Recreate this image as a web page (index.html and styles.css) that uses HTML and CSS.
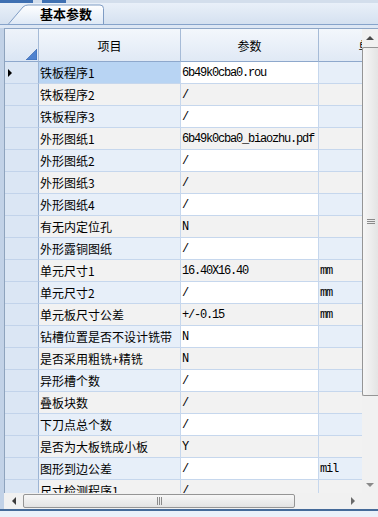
FILE: index.html
```html
<!DOCTYPE html>
<html lang="zh-CN">
  <head>
    <meta charset="UTF-8" />
    <meta name="viewport" content="width=device-width, initial-scale=1.0" />
    <title>基本参数</title>
    <link rel="stylesheet" href="styles.css">
  </head>
  <body>
    <div class="topstrip">
      <span class="seg seg-a"></span>
      <span class="seg seg-b"></span>
    </div>
    <div class="tabbar">
      <svg class="tab" width="97" height="21" viewBox="0 0 97 21">
        <defs>
          <linearGradient id="tabfill" x1="0" y1="0" x2="0" y2="1">
            <stop offset="0" stop-color="#ffffff" />
            <stop offset="1" stop-color="#dfe9f6" />
          </linearGradient>
        </defs>
        <path d="M0.5 21 L15 4 Q17 2 20 2 L92 2 Q95.5 2 95.5 5.5 L95.5 21" fill="url(#tabfill)" stroke="#7f9cc4" />
        <text x="58" y="16" text-anchor="middle" class="tab-label">基本参数</text>
      </svg>
    </div>

    <div class="panel">
      <div class="gridbox">
        <div class="viewport">
          <div class="row head">
            <div class="cell rowhead corner">
              <svg width="11" height="11" viewBox="0 0 11 11">
                <polygon points="11,0 11,11 0,11" fill="#4f82cf" stroke="#2f5ea8" stroke-width="0.6" />
              </svg>
            </div>
            <div class="cell">项目</div>
            <div class="cell">参数</div>
            <div class="cell">单位</div>
          </div>

          <div class="row odd selected">
            <div class="cell rowhead"><span class="marker"></span></div>
            <div class="cell name">铁板程序1</div>
            <div class="cell val">6b49k0cba0.rou</div>
            <div class="cell unit"></div>
          </div>
          <div class="row even">
            <div class="cell rowhead"></div>
            <div class="cell name">铁板程序2</div>
            <div class="cell val">/</div>
            <div class="cell unit"></div>
          </div>
          <div class="row odd">
            <div class="cell rowhead"></div>
            <div class="cell name">铁板程序3</div>
            <div class="cell val">/</div>
            <div class="cell unit"></div>
          </div>
          <div class="row even">
            <div class="cell rowhead"></div>
            <div class="cell name">外形图纸1</div>
            <div class="cell val">6b49k0cba0_biaozhu.pdf</div>
            <div class="cell unit"></div>
          </div>
          <div class="row odd">
            <div class="cell rowhead"></div>
            <div class="cell name">外形图纸2</div>
            <div class="cell val">/</div>
            <div class="cell unit"></div>
          </div>
          <div class="row even">
            <div class="cell rowhead"></div>
            <div class="cell name">外形图纸3</div>
            <div class="cell val">/</div>
            <div class="cell unit"></div>
          </div>
          <div class="row odd">
            <div class="cell rowhead"></div>
            <div class="cell name">外形图纸4</div>
            <div class="cell val">/</div>
            <div class="cell unit"></div>
          </div>
          <div class="row even">
            <div class="cell rowhead"></div>
            <div class="cell name">有无内定位孔</div>
            <div class="cell val">N</div>
            <div class="cell unit"></div>
          </div>
          <div class="row odd">
            <div class="cell rowhead"></div>
            <div class="cell name">外形露铜图纸</div>
            <div class="cell val">/</div>
            <div class="cell unit"></div>
          </div>
          <div class="row even">
            <div class="cell rowhead"></div>
            <div class="cell name">单元尺寸1</div>
            <div class="cell val">16.40X16.40</div>
            <div class="cell unit">mm</div>
          </div>
          <div class="row odd">
            <div class="cell rowhead"></div>
            <div class="cell name">单元尺寸2</div>
            <div class="cell val">/</div>
            <div class="cell unit">mm</div>
          </div>
          <div class="row even">
            <div class="cell rowhead"></div>
            <div class="cell name">单元板尺寸公差</div>
            <div class="cell val">+/-0.15</div>
            <div class="cell unit">mm</div>
          </div>
          <div class="row odd">
            <div class="cell rowhead"></div>
            <div class="cell name">钻槽位置是否不设计铣带</div>
            <div class="cell val">N</div>
            <div class="cell unit"></div>
          </div>
          <div class="row even">
            <div class="cell rowhead"></div>
            <div class="cell name">是否采用粗铣+精铣</div>
            <div class="cell val">N</div>
            <div class="cell unit"></div>
          </div>
          <div class="row odd">
            <div class="cell rowhead"></div>
            <div class="cell name">异形槽个数</div>
            <div class="cell val">/</div>
            <div class="cell unit"></div>
          </div>
          <div class="row even">
            <div class="cell rowhead"></div>
            <div class="cell name">叠板块数</div>
            <div class="cell val">/</div>
            <div class="cell unit"></div>
          </div>
          <div class="row odd">
            <div class="cell rowhead"></div>
            <div class="cell name">下刀点总个数</div>
            <div class="cell val">/</div>
            <div class="cell unit"></div>
          </div>
          <div class="row even">
            <div class="cell rowhead"></div>
            <div class="cell name">是否为大板铣成小板</div>
            <div class="cell val">Y</div>
            <div class="cell unit"></div>
          </div>
          <div class="row odd">
            <div class="cell rowhead"></div>
            <div class="cell name">图形到边公差</div>
            <div class="cell val">/</div>
            <div class="cell unit">mil</div>
          </div>
          <div class="row even">
            <div class="cell rowhead"></div>
            <div class="cell name">尺寸检测程序1</div>
            <div class="cell val">/</div>
            <div class="cell unit"></div>
          </div>
        </div>

        <div class="vscroll">
          <div class="vbtn"><span class="arrow-up"></span></div>
          <div class="vthumb">
            <span class="grip"></span>
            <span class="grip"></span>
            <span class="grip"></span>
          </div>
          <div class="vtrack"></div>
          <div class="vbtn"><span class="arrow-down"></span></div>
        </div>
      </div>

      <div class="hscroll">
        <div class="hbtn"><span class="arrow-left"></span></div>
        <div class="hthumb">
          <span class="hgrip"></span>
          <span class="hgrip"></span>
          <span class="hgrip"></span>
        </div>
        <div class="htrack"></div>
        <div class="hbtn"><span class="arrow-right"></span></div>
        <div class="hcorner"></div>
      </div>
    </div>
    <div class="footer"></div>
  </body>
</html>
```

FILE: styles.css
```css
body {
  margin: 0;
  width: 378px;
  height: 517px;
  overflow: hidden;
  background: #dde7f4;
  font-family: "Noto Sans CJK SC", sans-serif;
  font-size: 12px;
  color: #000;
}
.topstrip {
  height: 3px;
  display: flex;
  background: #d3deec;
}
.seg {
  display: block;
  height: 3px;
  background: #3f70b2;
}
.seg-a {
  width: 33px;
}
.seg-b {
  width: 24px;
  margin-left: 9px;
}
.tabbar {
  height: 21px;
  padding-left: 8px;
  display: flex;
  align-items: flex-end;
  background: linear-gradient(#e9f0f9, #d5e1f0);
  border-bottom: 1px solid #86a3ca;
}
.tab {
  display: block;
}
.tab-label {
  font-family: "Noto Sans CJK SC", sans-serif;
  font-size: 13px;
  font-weight: bold;
  fill: #000;
}
.panel {
  margin-top: 3px;
  padding-left: 4px;
  background: #c2d2e7;
}
.gridbox {
  display: flex;
  height: 465px;
  box-sizing: border-box;
  border-top: 1px solid #8ea6c6;
  border-left: 1px solid #8ea3bd;
}
.viewport {
  width: 357px;
  overflow: hidden;
  background: #fff;
}
.row {
  display: grid;
  grid-template-columns: 34px 142px 138px 104px;
  height: 22px;
}
.cell {
  box-sizing: border-box;
  display: flex;
  align-items: center;
  padding-left: 1px;
  border-right: 1px solid #c6d7ed;
  border-bottom: 1px solid #c6d7ed;
  white-space: nowrap;
  overflow: hidden;
}
.rowhead {
  background: #dbe6f4;
  border-right: 1px solid #9cb4d4;
  border-bottom: 1px solid #c2d3ea;
  padding-left: 3px;
}
.head {
  height: 33px;
}
.head .cell {
  justify-content: center;
  padding-left: 0;
  background: linear-gradient(#f3f7fc, #e0e9f5);
  border-right: 1px solid #a6bbd7;
  border-bottom: 1px solid #8ea8cc;
}
.head .corner {
  justify-content: flex-end;
  align-items: flex-end;
  padding: 0 1px 1px 0;
  background: linear-gradient(#eef3fa, #dbe6f4);
}
.corner svg {
  display: block;
}
.odd .name,
.odd .unit {
  background: #e7eff9;
}
.odd .val {
  background: #fff;
}
.even .name,
.even .val,
.even .unit {
  background: #f2f2f2;
}
.selected .name {
  background: #b8d4f3;
}
.val,
.unit {
  font-family: "Liberation Mono", monospace;
  font-size: 12px;
  letter-spacing: -1.2px;
}
.marker {
  width: 0;
  height: 0;
  border-left: 4px solid #000;
  border-top: 4px solid transparent;
  border-bottom: 4px solid transparent;
}
.vscroll {
  width: 16px;
  display: flex;
  flex-direction: column;
  background: #f1f1f1;
}
.vbtn {
  height: 17px;
  display: flex;
  align-items: center;
  justify-content: center;
  flex: none;
}
.arrow-up {
  width: 0;
  height: 0;
  border-bottom: 4px solid #4a4a4a;
  border-left: 4px solid transparent;
  border-right: 4px solid transparent;
}
.arrow-down {
  width: 0;
  height: 0;
  border-top: 4px solid #8a8a8a;
  border-left: 4px solid transparent;
  border-right: 4px solid transparent;
}
.vthumb {
  height: 349px;
  margin-top: 1px;
  box-sizing: border-box;
  border: 1px solid #959595;
  border-right: none;
  border-radius: 2px 0 0 2px;
  background: linear-gradient(to right, #f6f6f6, #e4e4e4);
  display: flex;
  flex-direction: column;
  align-items: center;
  justify-content: center;
  gap: 1px;
  flex: none;
}
.grip {
  display: block;
  width: 8px;
  height: 1px;
  background: #8a8a8a;
}
.vtrack {
  flex: 1;
}
.hscroll {
  height: 16px;
  display: flex;
  background: #f1f1f1;
}
.hbtn {
  width: 19px;
  display: flex;
  align-items: center;
  justify-content: center;
  flex: none;
}
.arrow-left {
  width: 0;
  height: 0;
  border-right: 4px solid #3c3c3c;
  border-top: 4px solid transparent;
  border-bottom: 4px solid transparent;
}
.arrow-right {
  width: 0;
  height: 0;
  border-left: 4px solid #6a6a6a;
  border-top: 4px solid transparent;
  border-bottom: 4px solid transparent;
}
.hthumb {
  width: 272px;
  margin: 1px 0 1px 0;
  box-sizing: border-box;
  border: 1px solid #959595;
  border-radius: 2px;
  background: linear-gradient(#f7f7f7, #e3e3e3);
  display: flex;
  justify-content: center;
  align-items: center;
  gap: 1px;
  flex: none;
}
.hgrip {
  display: block;
  width: 1px;
  height: 8px;
  background: #8a8a8a;
}
.htrack {
  flex: 1;
}
.hcorner {
  width: 16px;
  flex: none;
  background: #f1f1f1;
}
.footer {
  height: 7px;
  border-top: 2px solid #456a99;
  background: #eaf1fa;
}
```
